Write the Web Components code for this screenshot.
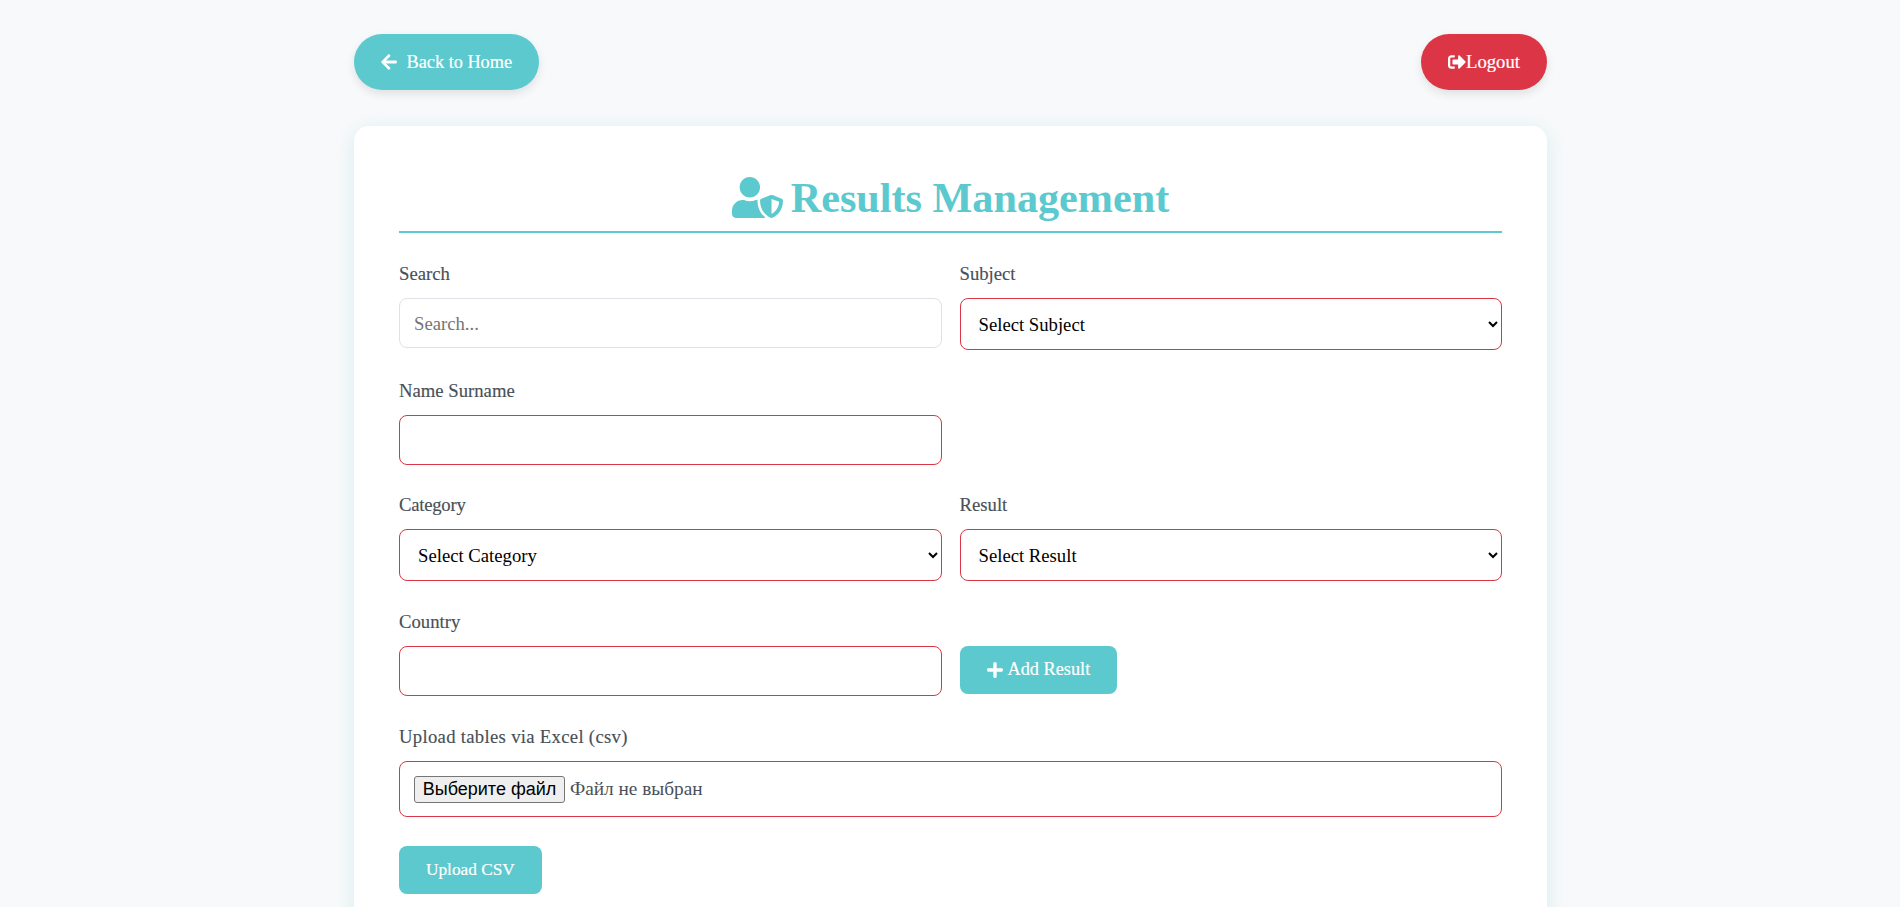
<!DOCTYPE html>
<html lang="en">
<head>
<meta charset="utf-8">
<title>Results Management</title>
<style>
html,body{margin:0;height:907px;overflow:hidden;background:#f8f9fa;}
body{font-family:"Liberation Serif",serif;}
.page{width:1193px;margin-left:354px;padding-top:34px;}
.top{display:flex;justify-content:space-between;margin-bottom:36px;}
.grid{display:grid;grid-template-columns:1fr 1fr;column-gap:18px;row-gap:28.6px;}
.wide{grid-column:1 / -1;margin-top:.6px;}
.actions{padding-top:28.5px;}
</style>
</head>
<body>
<template id="t-pill">
<style>
:host{display:inline-flex;}
a{display:inline-flex;align-items:center;gap:var(--gap,10px);height:56px;box-sizing:border-box;padding:0 var(--pad,26.5px);border-radius:28px;background:var(--bg,#5bc9ce);color:#fff;font:var(--fs,18.3px) "Liberation Serif",serif;-webkit-text-stroke:.2px #fff;text-decoration:none;box-shadow:0 4px 10px rgba(0,0,0,.1);}
</style>
<a href="#"><slot name="icon"></slot><slot></slot></a>
</template>
<template id="t-card">
<style>
:host{display:block;background:#fff;border-radius:15px;padding:45px 45px 60px;box-shadow:0 4px 20px rgba(91,201,206,.22);min-height:900px;box-sizing:border-box;}
</style>
<slot></slot>
</template>
<template id="t-title">
<style>
:host{display:flex;justify-content:center;align-items:center;gap:8px;height:60px;box-sizing:content-box;border-bottom:2px solid #5bc9ce;margin-bottom:29px;color:#5bc9ce;font:bold 42.2px/50px "Liberation Serif",serif;}
h1{font:inherit;margin:-7px 0 0;}
svg{width:51px;height:41px;fill:#5bc9ce;display:block;margin-top:-7px;}
</style>
<svg viewBox="0 0 640 512" aria-hidden="true"><path d="M622.3 271.1l-115.2-45c-4.1-1.6-12.6-3.7-22.2 0l-115.2 45c-10.7 4.2-17.7 14-17.7 24.9 0 111.6 68.7 188.8 132.9 213.9 9.6 3.7 18 1.6 22.2 0C558.4 489.9 640 420.5 640 296c0-10.9-7-20.7-17.7-24.9zM496 462.4V273.3l95.5 37.3c-5.6 87.1-60.9 135.4-95.5 151.8zM224 256c70.7 0 128-57.3 128-128S294.7 0 224 0 96 57.3 96 128s57.3 128 128 128zm96 40c0-2.5.8-4.7 1.1-7.1-2.5-.1-4.9-.9-7.5-.9h-16.7c-22.2 10.2-46.9 16-72.9 16s-50.6-5.8-72.9-16h-16.7C60.2 288 0 348.2 0 422.4V464c0 26.5 21.5 48 48 48h352c6.8 0 13.3-1.5 19.2-4-54-42.9-99.2-116.7-99.2-212z"/></svg>
<h1><slot></slot></h1>
</template>
<template id="t-field">
<style>
:host{display:block;font:18.7px "Liberation Serif",serif;color:#495057;}
label{display:block;height:24px;line-height:24px;margin-bottom:12px;letter-spacing:var(--ls,0);-webkit-text-stroke:.15px #495057;}
input,select,.file{display:block;width:100%;box-sizing:border-box;border:1px solid #dc3545;border-radius:8px;background:#fff;font:18.7px "Liberation Serif",serif;}
input{height:50px;padding:2px 14px 0;color:#212529;outline:none;}
input::placeholder{color:#757575;opacity:1;}
input.plain{border-color:#dee2e6;}
select{height:52px;padding:1px 14px 0;color:#000;}
.file{height:56.5px;padding:0 14px;display:flex;align-items:center;gap:5px;color:#495057;font-size:19.3px;}
.file button{height:27px;width:151px;padding:0;flex:none;border:1px solid #767676;border-radius:3px;background:#efefef;color:#000;font:18px "Liberation Sans",sans-serif;}
</style>
<label></label><div class="ctl"></div>
</template>
<template id="t-btn">
<style>
:host{display:inline-block;}
button{display:inline-flex;align-items:center;gap:5px;height:48px;box-sizing:border-box;padding:0 var(--pad,27px);border:0;border-radius:8px;background:#5bc9ce;color:#fff;font:var(--fs,18.3px) "Liberation Serif",serif;-webkit-text-stroke:.2px #fff;}
</style>
<button type="button"><slot name="icon"></slot><slot></slot></button>
</template>
<script>
class Base extends HTMLElement{
  mount(id){const r=this.attachShadow({mode:'open'});r.appendChild(document.getElementById(id).content.cloneNode(true));return r;}
}
class ResPill extends Base{constructor(){super();this.mount('t-pill');}}
class ResCard extends Base{constructor(){super();this.mount('t-card');}}
class ResTitle extends Base{constructor(){super();this.mount('t-title');}}
class ResBtn extends Base{constructor(){super();this.mount('t-btn');}}
class ResField extends Base{
  constructor(){super();this.root=this.mount('t-field');}
  connectedCallback(){
    const r=this.root;r.querySelector('label').textContent=this.getAttribute('label');
    const ctl=r.querySelector('.ctl'),k=this.getAttribute('kind');
    if(k==='select'){const s=document.createElement('select'),o=document.createElement('option');o.textContent=this.getAttribute('option');s.appendChild(o);ctl.appendChild(s);}
    else if(k==='file'){ctl.innerHTML='<div class="file"><button type="button">Выберите файл</button><span>Файл не выбран</span></div>';}
    else{const i=document.createElement('input');i.type='text';if(this.hasAttribute('placeholder')){i.placeholder=this.getAttribute('placeholder');i.className='plain';}ctl.appendChild(i);}
  }
}
customElements.define('res-pill',ResPill);
customElements.define('res-card',ResCard);
customElements.define('res-title',ResTitle);
customElements.define('res-btn',ResBtn);
customElements.define('res-field',ResField);
</script>
<div class="page">
  <div class="top">
    <res-pill><svg slot="icon" viewBox="0 0 448 512" width="16" height="18" fill="#fff"><path d="M257.5 445.1l-22.2 22.2c-9.4 9.4-24.6 9.4-33.9 0L7 273c-9.4-9.4-9.4-24.6 0-33.9L201.4 44.7c9.4-9.4 24.6-9.4 33.9 0l22.2 22.2c9.5 9.5 9.3 25-.4 34.3L136.6 216H424c13.3 0 24 10.7 24 24v32c0 13.3-10.7 24-24 24H136.6l120.5 114.8c9.8 9.3 10 24.8.4 34.3z"/></svg>Back to Home</res-pill>
    <res-pill style="--bg:#dc3545;--gap:0px;--fs:18.7px;--pad:27px"><svg slot="icon" viewBox="0 0 512 512" width="18" height="18" fill="#fff"><path d="M497 273L329 441c-15 15-41 4.5-41-17v-96H152c-13.3 0-24-10.7-24-24v-96c0-13.3 10.7-24 24-24h136V88c0-21.4 25.9-32 41-17l168 168c9.3 9.4 9.3 24.6 0 34zM192 436v-40c0-6.6-5.4-12-12-12H96c-17.7 0-32-14.3-32-32V160c0-17.7 14.3-32 32-32h84c6.6 0 12-5.4 12-12V76c0-6.6-5.4-12-12-12H96c-53 0-96 43-96 96v192c0 53 43 96 96 96h84c6.6 0 12-5.4 12-12z"/></svg>Logout</res-pill>
  </div>
  <res-card>
    <res-title>Results Management</res-title>
    <div class="grid">
      <res-field label="Search" placeholder="Search..."></res-field>
      <res-field label="Subject" kind="select" option="Select Subject"></res-field>
      <res-field label="Name Surname"></res-field>
      <div></div>
      <res-field label="Category" kind="select" option="Select Category" style="--ls:-.25px"></res-field>
      <res-field label="Result" kind="select" option="Select Result"></res-field>
      <res-field label="Country"></res-field>
      <div style="padding-top:36px"><res-btn><svg slot="icon" viewBox="0 0 448 512" width="16" height="18" fill="#fff"><path d="M416 208H272V64c0-17.67-14.33-32-32-32h-32c-17.67 0-32 14.33-32 32v144H32c-17.67 0-32 14.33-32 32v32c0 17.67 14.33 32 32 32h144v144c0 17.67 14.33 32 32 32h32c17.67 0 32-14.33 32-32V304h144c17.67 0 32-14.33 32-32v-32c0-17.67-14.33-32-32-32z"/></svg>Add Result</res-btn></div>
      <res-field class="wide" label="Upload tables via Excel (csv)" kind="file" style="--ls:.3px"></res-field>
    </div>
    <div class="actions"><res-btn style="--fs:17.3px">Upload CSV</res-btn></div>
  </res-card>
</div>
</body>
</html>
